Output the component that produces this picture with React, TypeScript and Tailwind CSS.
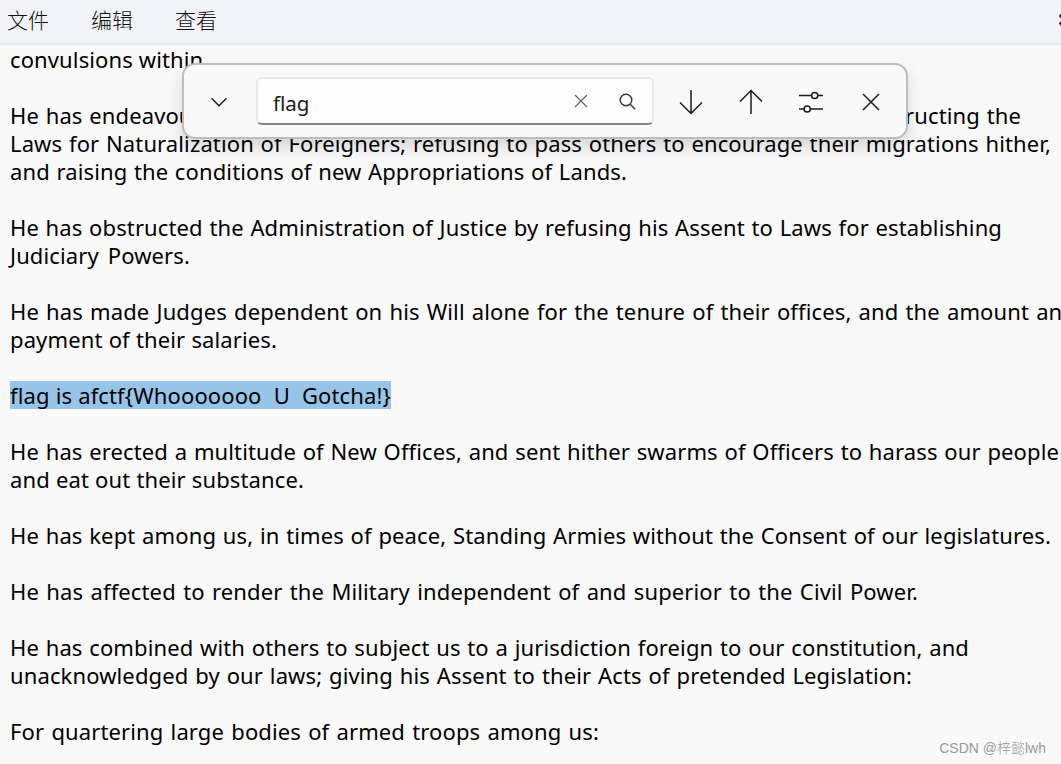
type Line = {
  text: string;
  width: string;
  selected?: boolean;
};

const menus = ["文件", "编辑", "查看"];

const lines: (Line | null)[] = [
  { text: "convulsions within", width: "w-[191px]" },
  null,
  {
    text: "He has endeavoured to prevent the population of these States; for that purpose obstructing the",
    width: "w-[1011px]",
  },
  {
    text: "Laws for Naturalization of Foreigners; refusing to pass others to encourage their migrations hither,",
    width: "w-[1041px]",
  },
  {
    text: "and raising the conditions of new Appropriations of Lands.",
    width: "w-[617px]",
  },
  null,
  {
    text: "He has obstructed the Administration of Justice by refusing his Assent to Laws for establishing",
    width: "w-[992px]",
  },
  { text: "Judiciary Powers.", width: "w-[180px]" },
  null,
  {
    text: "He has made Judges dependent on his Will alone for the tenure of their offices, and the amount and",
    width: "w-[1066px]",
  },
  { text: "payment of their salaries.", width: "w-[267px]" },
  null,
  {
    text: "flag is afctf{Whooooooo\u00a0 U\u00a0 Gotcha!}",
    width: "w-[381px]",
    selected: true,
  },
  null,
  {
    text: "He has erected a multitude of New Offices, and sent hither swarms of Officers to harass our people",
    width: "w-[1049px]",
  },
  { text: "and eat out their substance.", width: "w-[294px]" },
  null,
  {
    text: "He has kept among us, in times of peace, Standing Armies without the Consent of our legislatures.",
    width: "w-[1041px]",
  },
  null,
  {
    text: "He has affected to render the Military independent of and superior to the Civil Power.",
    width: "w-[908px]",
  },
  null,
  {
    text: "He has combined with others to subject us to a jurisdiction foreign to our constitution, and",
    width: "w-[959px]",
  },
  {
    text: "unacknowledged by our laws; giving his Assent to their Acts of pretended Legislation:",
    width: "w-[902px]",
  },
  null,
  {
    text: "For quartering large bodies of armed troops among us:",
    width: "w-[589px]",
  },
];

function MenuBar() {
  return (
    <header className="flex h-[45px] items-start justify-between border-b-2 border-[#e5e5ea] bg-[#f2f3f8] pl-[7px]">
      <nav className="flex gap-[42px] pt-1 text-[21px] leading-[30px] font-light text-[#111]">
        {menus.map((menu) => (
          <button key={menu} type="button">
            {menu}
          </button>
        ))}
      </nav>
      <div className="mt-[10px] w-[2px] shrink-0 overflow-hidden">
        <svg width="20" height="20" viewBox="0 0 20 20" fill="none" stroke="#222" strokeWidth="1.6">
          <path d="M3 3.5 0.8 6 3 8M3 11.5 0.8 13.5 3 16" />
        </svg>
      </div>
    </header>
  );
}

function Document() {
  return (
    <main className="pl-[10px] font-['Noto_Sans','Noto_Sans_CJK_SC',sans-serif] text-[22px] leading-7 tracking-[0.12px] whitespace-nowrap text-black">
      {lines.map((line, i) =>
        line ? (
          <p
            key={i}
            className={`h-7 [text-align-last:justify] ${line.width} ${line.selected ? "bg-[#97c5ea]" : ""}`}
          >
            {line.text}
          </p>
        ) : (
          <div key={i} className="h-7" />
        ),
      )}
    </main>
  );
}

function FindBar() {
  return (
    <div className="absolute top-[63px] left-[182px] flex h-[76px] w-[726px] items-center rounded-[13px] border-2 border-[#bdbdbd] bg-[#f9f9f9] text-[#1b1b1b] shadow-[0_8px_16px_rgba(0,0,0,0.14)]">
      <button type="button" className="flex w-[72px] justify-center pt-px pr-[3px]">
        <svg width="18" height="12" viewBox="0 0 18 12" fill="none" stroke="currentColor" strokeWidth="1.5">
          <path d="M1.5 2.2 9 9.7 16.5 2.2" />
        </svg>
      </button>
      <div className="flex h-12 w-[398px] items-center rounded-md border-2 border-[#e9e9e9] border-b-[#868686] bg-[#fdfdfd] pl-[15px]">
        <span className="flex-1 pt-[3px] font-['Noto_Sans',sans-serif] text-[20.5px] leading-7">flag</span>
        <button type="button" className="mr-[31px]">
          <svg width="14" height="14" viewBox="0 0 14 14" fill="none" stroke="#606060" strokeWidth="1.2">
            <path d="M1 1 13 13M13 1 1 13" />
          </svg>
        </button>
        <button type="button" className="mr-[16px] pt-px">
          <svg width="17" height="17" viewBox="0 0 17 17" fill="none" stroke="#333" strokeWidth="1.4">
            <circle cx="7" cy="7" r="5.8" />
            <path d="M11.2 11.2 16.2 16.2" />
          </svg>
        </button>
      </div>
      <div className="flex pt-0.5 pl-[7px]">
        <button type="button" className="flex w-[60px] justify-center">
          <svg width="24" height="26" viewBox="0 0 24 26" fill="none" stroke="currentColor" strokeWidth="1.5">
            <path d="M12 1V24.5M1 13.5 12 24.5 23 13.5" />
          </svg>
        </button>
        <button type="button" className="flex w-[60px] justify-center">
          <svg width="24" height="26" viewBox="0 0 24 26" fill="none" stroke="currentColor" strokeWidth="1.5">
            <path d="M12 25V1.5M1 12.5 12 1.5 23 12.5" />
          </svg>
        </button>
        <button type="button" className="flex w-[60px] items-center justify-center">
          <svg width="24" height="22" viewBox="0 0 24 22" fill="none" stroke="currentColor" strokeWidth="1.5">
            <path d="M0 4.5H12.5M19 4.5H24M0 18H5M11.5 18H24" />
            <circle cx="15.7" cy="4.5" r="3.1" />
            <circle cx="8.2" cy="18" r="3.1" />
          </svg>
        </button>
        <button type="button" className="flex w-[60px] items-center justify-center">
          <svg width="18" height="18" viewBox="0 0 18 18" fill="none" stroke="currentColor" strokeWidth="1.5">
            <path d="M1 1 17 17M17 1 1 17" />
          </svg>
        </button>
      </div>
    </div>
  );
}

export default function App() {
  return (
    <div className="relative h-[764px] w-[1061px] overflow-hidden bg-[#f9f9f9] font-['Noto_Sans_CJK_SC',sans-serif]">
      <MenuBar />
      <Document />
      <FindBar />
      <div className="absolute right-[15px] bottom-[6px] font-['Liberation_Sans','Noto_Sans_CJK_SC',sans-serif] text-[14px] leading-5 font-light whitespace-nowrap text-[#999]">
        CSDN @梓懿lwh
      </div>
    </div>
  );
}
